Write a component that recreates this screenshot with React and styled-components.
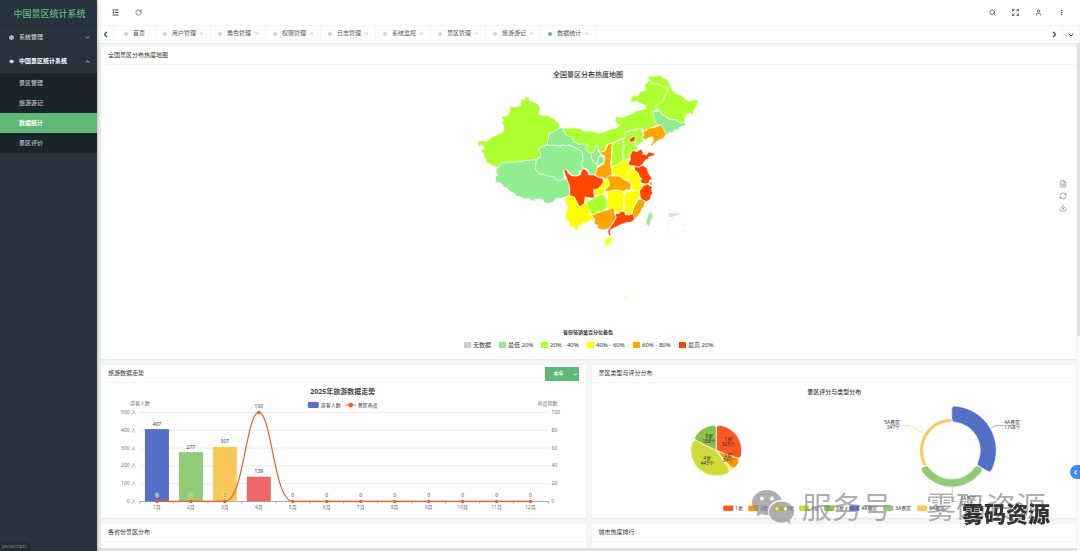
import React from "react";
import styled, { createGlobalStyle } from "styled-components";
import {
  ChevronDown,
  ChevronLeft,
  ChevronRight,
  ChevronUp,
  Download,
  FileText,
  GraduationCap,
  MoreVertical,
  RefreshCw,
  RotateCw,
  Search,
  Settings,
  User,
  X,
} from "lucide-react";

const GlobalStyle = createGlobalStyle`
  * { box-sizing: border-box; }
  body {
    margin: 0;
    overflow: hidden;
    background: #f5f5f5;
    color: #333;
    font: 6px/1.5 "Noto Sans", "Noto Sans CJK SC", sans-serif;
  }
  button, select { font: inherit; color: inherit; margin: 0; padding: 0; border: 0; background: none; cursor: pointer; }
  a { color: inherit; text-decoration: none; }
`;

const Page = styled.div`
  display: flex;
  height: 100vh;
`;

const Side = styled.aside`
  position: relative;
  z-index: 1;
  display: flex;
  flex: 0 0 97px;
  flex-direction: column;
  background: #28333e;
  box-shadow: 1px 0 4px rgba(0, 0, 0, 0.25);
`;

const Logo = styled.div`
  height: 25px;
  padding: 2px 0 0 2px;
  border-bottom: 1px solid #242e38;
  color: #5fb878;
  font-size: 9px;
  font-weight: 500;
  line-height: 24px;
  text-align: center;
`;

const MenuItem = styled.a`
  display: flex;
  align-items: center;
  gap: 5px;
  height: 24px;
  padding: 0 7px 0 9px;
  color: ${(p) => (p.$open ? "#fff" : "#c3c7cb")};
  font-weight: ${(p) => (p.$open ? 700 : 500)};

  span { flex: 1; }
`;

const SubMenu = styled.nav`
  background: #1c242b;
`;

const SubItem = styled.a`
  display: block;
  height: 20px;
  padding-left: 19px;
  background: ${(p) => (p.$active ? "#5fb878" : "none")};
  color: ${(p) => (p.$active ? "#fff" : "#bcc0c3")};
  font-weight: ${(p) => (p.$active ? 700 : 500)};
  line-height: 20px;
`;

const StatusHint = styled.div`
  width: 30px;
  height: 9px;
  margin-top: auto;
  padding-left: 2px;
  background: #222b34;
  color: #7c848b;
  font-size: 5px;
  line-height: 9px;
`;

const Main = styled.main`
  display: flex;
  flex: 1;
  flex-direction: column;
  min-width: 0;
`;

const Header = styled.header`
  display: flex;
  justify-content: space-between;
  flex: 0 0 26px;
  padding: 0 7px;
  border-bottom: 1px solid #f6f6f6;
  background: #fff;
`;

const HeaderGroup = styled.div`
  display: flex;
`;

const IconButton = styled.button`
  display: flex;
  align-items: center;
  justify-content: center;
  width: 23px;
  height: 25px;
  color: #444;
`;

const TabBar = styled.div`
  display: flex;
  flex: 0 0 17px;
  background: #fff;
  box-shadow: 0 1px 1px rgba(0, 0, 0, 0.04);
`;

const TabArrow = styled.button`
  display: flex;
  align-items: center;
  justify-content: center;
  width: 17px;
  border-right: 1px solid #f6f6f6;
  color: #444;
`;

const TabList = styled.div`
  display: flex;
  flex: 1;
`;

const Tab = styled.div`
  display: flex;
  align-items: center;
  padding: 0 ${(p) => (p.$home ? 10 : 7)}px 2px;
  border-right: 1px solid #f6f6f6;
  color: #555;

  &::before {
    width: 4px;
    height: 4px;
    margin-right: 5px;
    border-radius: 50%;
    background: ${(p) => (p.$active ? "#5fb878" : "#d2d2d2")};
    content: "";
  }
`;

const TabClose = styled.button`
  display: flex;
  width: 5px;
  margin: 0 -1px 0 3px;
  color: #bbb;
`;

const Body = styled.div`
  display: flex;
  flex: 1;
  min-height: 0;
`;

const Content = styled.div`
  flex: 1;
  min-width: 0;
  padding: 4px 1px 0 4px;
  overflow: hidden;
`;

const Row = styled.div`
  display: grid;
  grid-template-columns: repeat(${(p) => p.$cols || 1}, minmax(0, 1fr));
  gap: 6px;
  margin-bottom: 6px;
`;

const Card = styled.section`
  position: relative;
  background: #fff;
  box-shadow: 0 1px 1px rgba(0, 0, 0, 0.05);
`;

const CardHead = styled.div`
  display: flex;
  align-items: center;
  justify-content: space-between;
  height: 18px;
  padding: 0 7px;
  border-bottom: 1px solid #f6f6f6;
`;

const Chart = styled.svg`
  display: block;
  width: 100%;
  height: ${(p) => p.$h}px;
  font-size: 5px;
`;

const Empty = styled.div`
  height: 134px;
`;

const Toolbox = styled.div`
  position: absolute;
  top: 133px;
  right: 9px;
  display: flex;
  flex-direction: column;
  gap: 4px;
`;

const ToolButton = styled.button`
  display: flex;
  color: #888;
`;

const Picker = styled.label`
  position: relative;
  color: #fff;

  select {
    display: block;
    width: 34px;
    height: 14px;
    padding-left: 9px;
    appearance: none;
    background: #5fb878;
    font-size: 5px;
    font-weight: 700;
  }

  svg {
    position: absolute;
    top: 5px;
    right: 1px;
  }
`;

const VTrack = styled.div`
  width: 3px;
  background: #fafafa;
`;

const VThumb = styled.div`
  height: 58%;
  background: #e0e0e0;
`;

const HTrack = styled.div`
  flex: 0 0 3px;
  margin-right: 3px;
  background: #e0e0e0;
`;

const SideHandle = styled.button`
  position: fixed;
  right: 0;
  bottom: 72px;
  display: flex;
  align-items: center;
  justify-content: center;
  width: 10px;
  height: 14px;
  border-radius: 7px 0 0 7px;
  background: #4088fb;
  color: #fff;
`;

const Watermark = styled.div`
  position: fixed;
  right: 34px;
  bottom: 26px;
  display: flex;
  align-items: center;
  gap: 8px;
  color: rgba(135, 135, 135, 0.68);
  font-size: 30px;
  font-weight: 400;
  line-height: 36px;
  pointer-events: none;

  span + span { margin-left: 26px; }
`;

const Stamp = styled.div`
  position: fixed;
  right: 30px;
  bottom: 26px;
  color: #333;
  font-size: 22px;
  font-weight: 900;
  line-height: 24px;
  pointer-events: none;
`;

const LOW = "#90ee90";
const LIME = "#adff2f";
const YELLOW = "#ffff00";
const ORANGE = "#ffa500";
const RED = "#ff4500";

const provinces = [
  ["新疆", LIME, "52,233 66,226 74,229 82,228 92,219 104,212 112,210 124,204 132,196 131,185 127,172 131,166 124,155 138,153 146,149 151,124 166,126 181,122 184,103 193,103 196,94 208,99 209,109 222,111 234,118 240,130 236,147 250,152 262,151 284,162 298,178 299,189 279,201 268,205 264,222 268,233 258,240 234,251 242,264 242,276 222,285 200,286 170,291 140,292 122,295 116,307 106,305 98,303 90,296 78,292 79,284 72,276 70,266 62,256 73,252 72,242 64,241 57,245"],
  ["西藏", LOW, "116,307 107,311 109,322 113,331 105,336 107,342 106,352 121,353 132,366 143,371 152,381 165,386 168,393 187,397 192,402 206,400 222,410 224,402 235,402 249,405 254,413 264,416 280,411 288,399 303,401 312,396 324,396 329,386 328,362 322,345 314,340 297,345 280,334 254,329 231,320 227,300 229,287 222,285 200,286 170,291 140,292 122,295"],
  ["青海", LOW, "242,276 229,284 227,300 226,312 231,320 240,327 254,329 262,333 280,334 290,345 300,346 312,342 311,318 322,314 332,327 345,334 360,327 357,318 366,316 372,309 362,300 369,286 369,270 365,259 349,250 330,240 317,242 306,239 305,243 280,241 262,240 234,251 242,264"],
  ["甘肃", LOW, "262,240 264,222 268,205 279,201 299,189 308,187 314,203 321,212 337,216 341,229 357,238 366,236 374,236 383,240 378,250 382,258 389,264 396,262 394,278 402,292 411,297 414,284 416,274 424,272 433,281 433,290 424,298 413,300 408,325 398,331 388,327 381,312 372,309 362,300 369,286 369,270 365,259 349,250 330,240 317,242 306,239 305,243 280,241"],
  ["宁夏", LOW, "394,262 402,257 405,245 411,238 415,250 413,258 420,264 424,272 416,274 414,284 411,297 402,292 394,278"],
  ["内蒙古", LIME, "301,187 318,190 336,189 358,190 372,199 396,198 416,205 435,200 452,192 468,190 480,180 472,176 465,168 468,155 487,158 498,152 515,147 530,137 557,132 556,121 544,116 528,109 510,111 518,92 532,93 540,81 560,74 552,62 570,44 575,55 598,58 608,65 622,65 620,83 613,97 609,110 596,118 586,122 590,134 580,138 581,152 584,168 602,180 575,187 552,200 548,190 535,192 515,196 495,200 497,218 481,222 466,230 459,234 440,240 436,258 420,262 415,250 411,238 405,245 402,262 388,264 382,258 378,250 383,240 374,236 357,238 341,229 337,216 321,212 314,203 308,187"],
  ["黑龙江", LIME, "562,38 572,33 580,35 602,30 610,39 624,45 630,60 638,77 650,88 662,90 675,102 688,108 700,105 716,105 710,124 704,130 698,150 688,145 680,148 676,158 674,172 662,173 648,165 630,163 616,152 606,150 600,138 590,134 586,122 596,118 609,110 613,97 620,83 622,65 608,65 598,58 575,55 570,46"],
  ["吉林", LOW, "580,138 590,140 600,137 606,150 616,152 622,160 630,163 648,165 662,173 674,172 679,181 660,186 652,196 645,193 638,203 628,202 624,209 618,208 610,195 602,180 593,178 584,168 581,152"],
  ["辽宁", ORANGE, "548,200 556,198 566,190 586,187 602,180 610,190 618,208 612,218 595,226 580,238 577,243 571,240 582,226 577,215 563,219 556,225 546,218 552,210"],
  ["河北", LIME, "495,200 505,201 515,196 525,197 535,190 543,191 546,202 552,206 546,218 552,228 540,235 531,247 536,252 520,258 510,270 505,285 490,281 489,262 495,250 492,240 491,222 496,212"],
  ["北京", RED, "511,219 516,218 519,213 526,218 524,228 514,232 508,226"],
  ["天津", LOW, "524,232 532,231 531,244 526,246"],
  ["山西", LIME, "460,237 476,226 491,221 489,232 492,240 488,258 487,270 490,281 484,292 470,300 452,307 455,285 457,262 454,245"],
  ["陕西", ORANGE, "459,234 444,238 436,258 420,262 424,268 434,272 434,285 432,296 420,304 412,308 405,330 415,335 425,337 441,343 449,340 456,330 456,314 452,307 452,290 455,275 454,260 455,245"],
  ["山东", RED, "510,270 519,256 531,260 542,252 550,262 548,266 560,270 566,261 584,265 582,272 566,276 566,281 556,286 548,297 537,306 520,302 510,303 503,298 511,285"],
  ["河南", YELLOW, "484,292 490,281 499,287 508,284 503,298 516,304 520,311 509,315 502,322 506,336 511,348 490,343 480,334 470,333 457,328 456,312 458,303 470,300"],
  ["江苏", RED, "522,304 537,307 548,301 562,310 564,320 567,328 577,341 568,346 568,354 556,357 540,352 545,340 538,337 535,325 524,315"],
  ["安徽", YELLOW, "509,315 514,309 520,311 524,315 535,325 538,337 545,340 540,352 551,362 545,372 538,378 522,378 513,366 515,356 506,350 506,336 502,322"],
  ["上海", ORANGE, "568,350 576,351 578,360 570,360"],
  ["浙江", RED, "551,362 562,357 570,362 577,366 574,374 578,385 573,392 570,404 558,410 545,404 538,390 540,376"],
  ["湖北", ORANGE, "441,343 443,335 449,331 457,334 470,333 480,334 490,343 506,350 513,358 511,376 498,374 488,381 470,374 452,378 442,380 433,376 448,362 446,350"],
  ["重庆", YELLOW, "428,350 436,343 446,346 448,360 432,374 437,390 428,386 415,394 402,386 400,373 414,372 424,360"],
  ["四川", RED, "311,316 318,313 327,327 336,332 348,334 361,330 364,318 371,311 383,318 386,330 400,329 415,337 428,340 430,352 424,360 414,372 400,374 402,386 404,400 385,398 376,396 374,414 362,425 356,422 350,410 342,395 328,392 330,376 328,362 322,345"],
  ["云南", YELLOW, "318,395 328,392 342,395 350,410 356,422 362,425 374,414 376,396 388,408 382,416 395,437 388,448 404,456 400,466 390,465 380,475 370,474 360,484 353,482 355,495 350,497 340,485 332,487 328,470 318,463 315,455 320,435 324,425 316,410"],
  ["贵州", LIME, "380,410 395,403 404,395 415,394 422,388 437,393 441,408 441,428 430,441 420,440 408,444 402,450 392,446 386,430 382,418"],
  ["湖南", YELLOW, "441,380 452,378 470,374 490,379 494,392 490,410 491,436 478,441 466,443 460,430 450,434 441,427 443,412"],
  ["江西", YELLOW, "495,384 511,376 520,378 536,374 541,390 530,408 522,425 520,437 514,447 498,449 493,436 495,420 491,410"],
  ["福建", ORANGE, "536,403 545,404 556,408 552,425 545,432 542,442 532,455 524,463 516,446 522,425"],
  ["广西", ORANGE, "392,448 402,450 410,444 430,438 441,436 450,432 462,428 464,445 469,455 460,472 446,490 432,495 412,490 412,480 402,478 405,462"],
  ["广东", RED, "466,446 478,445 482,439 496,440 495,449 505,450 520,447 524,463 512,472 500,473 490,476 475,482 452,494 450,502 453,512 447,512 443,500 448,490 460,474 469,458"],
  ["海南", YELLOW, "434,525 446,517 458,518 457,525 451,536 442,543 433,538"],
  ["台湾", LOW, "576,441 578,455 571,470 568,487 559,477 559,462 568,445"],
];

const mapLegend = [
  ["无数据", "#ccc", 464],
  ["最低 20%", LOW, 499],
  ["20% - 40%", LIME, 541],
  ["40% - 60%", YELLOW, 587],
  ["60% - 80%", ORANGE, 633],
  ["最高 20%", RED, 679],
];

const tabs = ["首页", "用户管理", "角色管理", "权限管理", "日志管理", "系统监控", "景区管理", "旅游游记", "数据统计"];
const subMenu = ["景区管理", "旅游游记", "数据统计", "景区评价"];

const bars = [
  [407, "#5470c6"],
  [277, "#91cc75"],
  [307, "#fac858"],
  [139, "#ee6666"],
];
const heat = [0, 0, 0, 100, 0, 0, 0, 0, 0, 0, 0, 0];

const stars = [
  ["1星", "325个", "#ff5722", 0, 110, 728, 441],
  ["2星", "84个", "#ff9800", 110, 139, 728, 457],
  ["3星", "", "#ffeb3b", 139, 145, 0, 0],
  ["4星", "445个", "#cddc39", 145, 296, 707, 460],
  ["5星", "188个", "#8bc34a", 296, 360, 709, 438],
];

const pieLegend = [
  ["1星", "#ff5722", 723],
  ["2星", "#ff9800", 748],
  ["3星", "#ffeb3b", 774],
  ["4星", "#cddc39", 799],
  ["5星", "#8bc34a", 824],
  ["4A景区", "#5470c6", 849],
  ["3A景区", "#91cc75", 883],
  ["5A景区", "#fac858", 917],
];

// ring or pie slice with rounded corners, angles in degrees clockwise from 12 o'clock
function slice(cx, cy, r0, r1, from, to, k) {
  const pt = (r, deg) => {
    const a = ((deg - 90) * Math.PI) / 180;
    return `${(cx + r * Math.cos(a)).toFixed(2)} ${(cy + r * Math.sin(a)).toFixed(2)}`;
  };
  const big = to - from > 180 ? 1 : 0;
  const turn = (r) => Math.min(((k / r) * 180) / Math.PI, (to - from) / 3);
  const d1 = turn(r1);
  const outer = `L ${pt(r1 - k, from)} Q ${pt(r1, from)} ${pt(r1, from + d1)} A ${r1} ${r1} 0 ${big} 1 ${pt(r1, to - d1)} Q ${pt(r1, to)} ${pt(r1 - k, to)}`;
  if (!r0) return `M ${cx} ${cy} ${outer} Z`;
  const d0 = turn(r0);
  return `M ${pt(r0 + k, from)} ${outer} L ${pt(r0 + k, to)} Q ${pt(r0, to)} ${pt(r0, to - d0)} A ${r0} ${r0} 0 ${big} 0 ${pt(r0, from + d0)} Q ${pt(r0, from)} ${pt(r0 + k, from)} Z`;
}

function HeatMap() {
  return (
    <Chart $h={294} viewBox="101 65 975 294">
      <g transform="translate(460 65) scale(0.3333)" stroke="#fff" strokeWidth="2" strokeLinejoin="round">
        {provinces.map(([name, color, points]) => (
          <polygon key={name} points={points} fill={color} />
        ))}
        <path d="M624 445H662L650 450L640 455L628 455Z" fill="#ddd" stroke="none" />
        <path d="M635 465l5-3M676 446v5M676 475v5M640 500v4M672 495v4" stroke="#ddd" />
        <path d="M624 457V512" stroke="#f4f4f4" />
      </g>
      <rect x="624" y="296" width="2" height="2" fill="#ffff9c" />
      <text x="588" y="77" fontSize="7" fontWeight="500" textAnchor="middle" fill="#333">全国景区分布热度地图</text>
      <text x="588" y="334" fontWeight="700" textAnchor="middle" fill="#333">省份按销量百分位着色</text>
      {mapLegend.map(([label, color, x]) => (
        <g key={label} fontSize="6" fill="#333">
          <rect x={x} y="342" width="7" height="6" fill={color} />
          <text x={x + 9} y="347">{label}</text>
        </g>
      ))}
    </Chart>
  );
}

function TrendChart() {
  const x = (i) => 157 + i * 34;
  return (
    <Chart $h={135} viewBox="101 383 485 135" fill="#6e7079">
      <text x="343" y="394" fontSize="7" fontWeight="700" textAnchor="middle" fill="#464646">2025年旅游数据走势</text>
      <rect x="308" y="402" width="11" height="6" rx="1" fill="#5470c6" />
      <text x="321" y="407" fill="#333">游客人数</text>
      <path d="M346 405H356" stroke="#ff5722" />
      <circle cx="351" cy="405" r="2.4" fill="#ff5722" />
      <text x="358" y="407" fill="#333">景区热度</text>
      <text x="140" y="405" textAnchor="middle">游客人数</text>
      <text x="548" y="405" textAnchor="middle">热度指数</text>
      {[0, 1, 2, 3, 4, 5].map((n) => (
        <g key={n}>
          <path d={`M140 ${501.5 - n * 17.8}H549`} stroke={n ? "#e9ecf5" : "#6e7079"} strokeWidth={n ? 1 : 0.6} />
          <text x="136" y={503 - n * 17.8} textAnchor="end">{n * 100} 人</text>
          <text x="552" y={503 - n * 17.8}>{n * 20}</text>
        </g>
      ))}
      {bars.map(([value, color], i) => (
        <g key={color}>
          <rect x={x(i) - 12} y={501.5 - value * 0.178} width="24" height={value * 0.178} fill={color} />
          <text x={x(i)} y={498 - value * 0.178} textAnchor="middle" fill="#333">{value}</text>
        </g>
      ))}
      {heat.map((v, i) => (
        <path key={i} d={`M${140 + i * 34} 501.5v2`} stroke="#6e7079" strokeWidth="0.6" />
      ))}
      <path d="M549 501.5v2" stroke="#6e7079" strokeWidth="0.6" />
      <path d="M157 501.5H225C244 501.5 246 412.5 259 412.5C272 412.5 274 501.5 293 501.5H531" fill="none" stroke="#ff5722" strokeWidth="1.2" />
      {heat.map((v, i) => (
        <g key={i} textAnchor="middle">
          <circle cx={x(i)} cy={501.5 - v * 0.89} r="1.8" fill="#ff5722" />
          <text x={x(i)} y={(v ? 499 : 497) - v * 0.91} fill="#444" stroke={v ? "none" : "#fff"} strokeWidth="0.8" paintOrder="stroke">{v}</text>
          <text x={x(i)} y="509">{i + 1}月</text>
        </g>
      ))}
    </Chart>
  );
}

function TypeChart() {
  return (
    <Chart $h={135} viewBox="592 383 484 135" fill="#333">
      <text x="834" y="394" fontSize="6" fontWeight="500" textAnchor="middle">景区评分与类型分布</text>
      {stars.map(([name, count, color, from, to]) => (
        <path key={name} d={slice(716, 450.5, 0, 25.5, from, to, to - from < 10 ? 1 : 4)} fill={color} stroke="#fff" strokeWidth="0.8" />
      ))}
      {stars.filter((s) => s[1]).map(([name, count, color, from, to, x, y]) => (
        <g key={name} textAnchor="middle">
          <text x={x} y={y}>{name}</text>
          <text x={x} y={y + 5}>{count}</text>
        </g>
      ))}
      <path d={slice(951.5, 450.5, 28.5, 44.5, 0, 120, 3)} fill="#5470c6" stroke="#fff" strokeWidth="0.6" />
      <path d={slice(951.5, 450.5, 28.5, 36.5, 120, 240, 3)} fill="#91cc75" stroke="#fff" strokeWidth="0.6" />
      <path d={slice(951.5, 450.5, 28.5, 32, 240, 360, 1)} fill="#fac858" stroke="#fff" strokeWidth="0.6" />
      <g fill="none" strokeWidth="0.6">
        <path d="M991 428L996 425.5H1003" stroke="#5470c6" />
        <path d="M924 434L909 425.5H902" stroke="#fac858" />
        <path d="M952 487V501.5H958" stroke="#91cc75" />
      </g>
      <text x="1004" y="424">4A景区</text>
      <text x="1004" y="429">1708个</text>
      <text x="900" y="424" textAnchor="end">5A景区</text>
      <text x="900" y="429" textAnchor="end">347个</text>
      <text x="960" y="500">3A景区</text>
      <text x="960" y="505">623个</text>
      {pieLegend.map(([label, color, x]) => (
        <g key={label}>
          <rect x={x} y="505.5" width="10" height="5.5" rx="1" fill={color} />
          <text x={x + 12} y="510">{label}</text>
        </g>
      ))}
    </Chart>
  );
}

function ShrinkIcon() {
  return (
    <svg width="7" height="7" viewBox="0 0 14 14" fill="none" stroke="currentColor" strokeWidth="2">
      <path d="M1 2H13M6 7H13M1 12H13" />
      <path d="M4 4.5L1 7L4 9.5Z" fill="currentColor" strokeWidth="0.5" />
    </svg>
  );
}

function FullscreenIcon() {
  return (
    <svg width="7" height="7" viewBox="0 0 14 14" fill="none" stroke="currentColor" strokeWidth="1.5">
      <path d="M1 5V1H5M1 1L5 5M9 1H13V5M13 1L9 5M1 9V13H5M1 13L5 9M9 13H13V9M13 13L9 9" />
    </svg>
  );
}

function ChatLogo() {
  return (
    <svg width="42" height="36" viewBox="0 0 42 36">
      <path
        fill="currentColor"
        fillRule="evenodd"
        d="M15 1C7 1 0 6.500 0 13.500C0 17.500 2 20.500 5.500 23L4.500 27.500L9.500 25C12 26 14 26 16.500 26C14.500 17 21 11 29.500 11C28 5 22 1 15 1ZM10 7.500a2 2 0 1 1 0 4a2 2 0 1 1 0-4ZM20 7.500a2 2 0 1 1 0 4a2 2 0 1 1 0-4Z"
      />
      <path
        fill="currentColor"
        fillRule="evenodd"
        d="M29.500 12.500C22.500 12.500 17 17 17 23C17 29 22.500 33.500 29.500 33.500C31.500 33.500 33.500 33 35 32.500L38.500 35L37.500 31C40 29 42 26.500 42 23C42 17 36 12.500 29.500 12.500ZM25 18a1.700 1.700 0 1 1 0 3.400a1.700 1.700 0 1 1 0-3.400ZM33.500 18a1.700 1.700 0 1 1 0 3.400a1.700 1.700 0 1 1 0-3.400Z"
      />
    </svg>
  );
}

function App() {
  return (
    <Page>
      <GlobalStyle />
      <Side>
        <Logo>中国景区统计系统</Logo>
        <MenuItem href="#">
          <Settings size={5} strokeWidth={5} />
          <span>系统管理</span>
          <ChevronDown size={5} strokeWidth={4} />
        </MenuItem>
        <MenuItem href="#" $open>
          <GraduationCap size={5} fill="currentColor" />
          <span>中国景区统计系统</span>
          <ChevronUp size={5} strokeWidth={4} />
        </MenuItem>
        <SubMenu>
          {subMenu.map((name) => (
            <SubItem key={name} href="#" $active={name === "数据统计"}>{name}</SubItem>
          ))}
        </SubMenu>
        <StatusHint>javascript:;</StatusHint>
      </Side>

      <Main>
        <Header>
          <HeaderGroup>
            <IconButton aria-label="收起菜单"><ShrinkIcon /></IconButton>
            <IconButton aria-label="刷新"><RotateCw size={7} /></IconButton>
          </HeaderGroup>
          <HeaderGroup>
            <IconButton aria-label="搜索"><Search size={7} strokeWidth={2.500} /></IconButton>
            <IconButton aria-label="全屏"><FullscreenIcon /></IconButton>
            <IconButton aria-label="用户"><User size={7} strokeWidth={2.500} /></IconButton>
            <IconButton aria-label="更多"><MoreVertical size={7} strokeWidth={3} /></IconButton>
          </HeaderGroup>
        </Header>

        <TabBar>
          <TabArrow aria-label="向左"><ChevronLeft size={9} strokeWidth={3} /></TabArrow>
          <TabList>
            {tabs.map((name, i) => (
              <Tab key={name} $home={i === 0} $active={i === tabs.length - 1}>
                {name}
                {i > 0 && <TabClose aria-label="关闭"><X size={5} strokeWidth={3} /></TabClose>}
              </Tab>
            ))}
          </TabList>
          <TabArrow aria-label="向右"><ChevronRight size={9} strokeWidth={3} /></TabArrow>
          <TabArrow aria-label="更多标签"><ChevronDown size={8} strokeWidth={3} /></TabArrow>
        </TabBar>

        <Body>
          <Content>
            <Row>
              <Card>
                <CardHead>全国景区分布热度地图</CardHead>
                <HeatMap />
                <Toolbox>
                  <ToolButton aria-label="数据视图"><FileText size={8} /></ToolButton>
                  <ToolButton aria-label="还原"><RefreshCw size={8} /></ToolButton>
                  <ToolButton aria-label="下载"><Download size={8} /></ToolButton>
                </Toolbox>
              </Card>
            </Row>
            <Row $cols={2}>
              <Card>
                <CardHead>
                  旅游数据走势
                  <Picker>
                    <select aria-label="时间范围" defaultValue="year">
                      <option value="year">本年</option>
                      <option value="month">本月</option>
                    </select>
                    <ChevronDown size={5} strokeWidth={4} />
                  </Picker>
                </CardHead>
                <TrendChart />
              </Card>
              <Card>
                <CardHead>景区类型与评分分布</CardHead>
                <TypeChart />
              </Card>
            </Row>
            <Row $cols={2}>
              <Card>
                <CardHead>各省份景区分布</CardHead>
                <Empty />
              </Card>
              <Card>
                <CardHead>城市热度排行</CardHead>
                <Empty />
              </Card>
            </Row>
          </Content>
          <VTrack><VThumb /></VTrack>
        </Body>
        <HTrack />
      </Main>

      <SideHandle aria-label="展开"><ChevronLeft size={7} strokeWidth={4} /></SideHandle>
      <Watermark>
        <ChatLogo />
        <span>服务号</span>
        <span>雾码资源</span>
      </Watermark>
      <Stamp>雾码资源</Stamp>
    </Page>
  );
}

export default App;
